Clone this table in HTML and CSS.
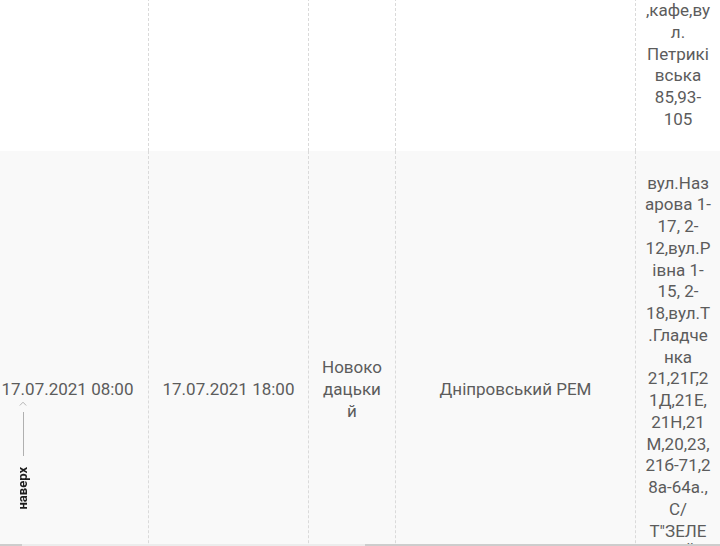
FILE: index.html
```html
<!DOCTYPE html>
<html lang="uk">
<head>
<meta charset="utf-8">
<title>Графік відключень</title>
<link rel="stylesheet" href="styles.css">
</head>
<body>
<div class="scroller">
  <table class="schedule">
    <colgroup>
      <col class="c-start">
      <col class="c-end">
      <col class="c-district">
      <col class="c-rem">
      <col class="c-addr">
    </colgroup>
    <tbody>
      <tr class="row-odd">
        <td></td>
        <td></td>
        <td></td>
        <td></td>
        <td class="addr">,кафе,вул. Петриківська 85,93-105</td>
      </tr>
      <tr class="row-even">
        <td>17.07.2021 08:00</td>
        <td>17.07.2021 18:00</td>
        <td>Новокодацький</td>
        <td>Дніпровський РЕМ</td>
        <td class="addr">вул.Назарова 1-17, 2-12,вул.Рівна 1-15, 2-18,вул.Т.Гладченка 21,21Г,21Д,21Е,21Н,21М,20,23,21б-71,28а-64а., С/Т"ЗЕЛЕНИЙ ГАЙ" 1-40</td>
      </tr>
    </tbody>
  </table>
</div>
<a class="to-top" href="#">
  <svg class="to-top-caret" width="8" height="5" viewBox="0 0 8 5"><path d="M0.8 4.5 L4 1.2 L7.2 4.5" fill="none" stroke="#b5b5b5" stroke-width="1"/></svg>
  <span class="to-top-line"></span>
  <span class="to-top-label">наверх</span>
</a>
<div class="hscroll"><div class="hscroll-thumb"></div></div>
</body>
</html>
```
FILE: styles.css
```css
html, body {
  margin: 0;
  padding: 0;
  background: #ffffff;
  overflow: hidden;
}

body {
  font-family: Roboto, "Liberation Sans", Arial, sans-serif;
  color: #5c5c5c;
}

.scroller {
  margin: -22px 0 0 -13px;
}

.schedule {
  table-layout: fixed;
  width: 733px;
  border-collapse: separate;
  border-spacing: 0;
  font-size: 17px;
  line-height: 1.28;
}

.c-start { width: 161px; }
.c-end { width: 160px; }
.c-district { width: 87px; }
.c-rem { width: 240px; }
.c-addr { width: 85px; }

.schedule td {
  padding: 22px 10px 20px;
  text-align: center;
  vertical-align: middle;
  overflow-wrap: break-word;
}

.schedule td:first-child {
  padding-left: 0;
  padding-right: 0;
}

.schedule td.addr {
  padding-left: 9px;
  padding-right: 9px;
}

.schedule td + td {
  border-left: 1px dashed #dadada;
}

.row-odd { background: #ffffff; }
.row-even { background: #f9f9f9; }

.row-even td {
  padding-bottom: 25px;
}

.to-top {
  position: fixed;
  left: 14px;
  top: 401px;
  width: 18px;
  display: flex;
  flex-direction: column;
  align-items: center;
  text-decoration: none;
}

.to-top-caret {
  display: block;
}

.to-top-line {
  display: block;
  width: 1px;
  height: 44px;
  margin-top: 6px;
  background: #b0b0b0;
}

.to-top-label {
  margin-top: 11px;
  writing-mode: vertical-rl;
  transform: rotate(180deg);
  font-size: 13px;
  font-weight: 700;
  line-height: 12px;
  color: #1e1e1e;
}

.hscroll {
  position: fixed;
  left: 0;
  right: 0;
  bottom: 0;
  height: 2px;
  background: #cdcdcd;
}

.hscroll-thumb {
  width: 343px;
  height: 2px;
  margin-left: 22px;
  background: #ececec;
}
```
